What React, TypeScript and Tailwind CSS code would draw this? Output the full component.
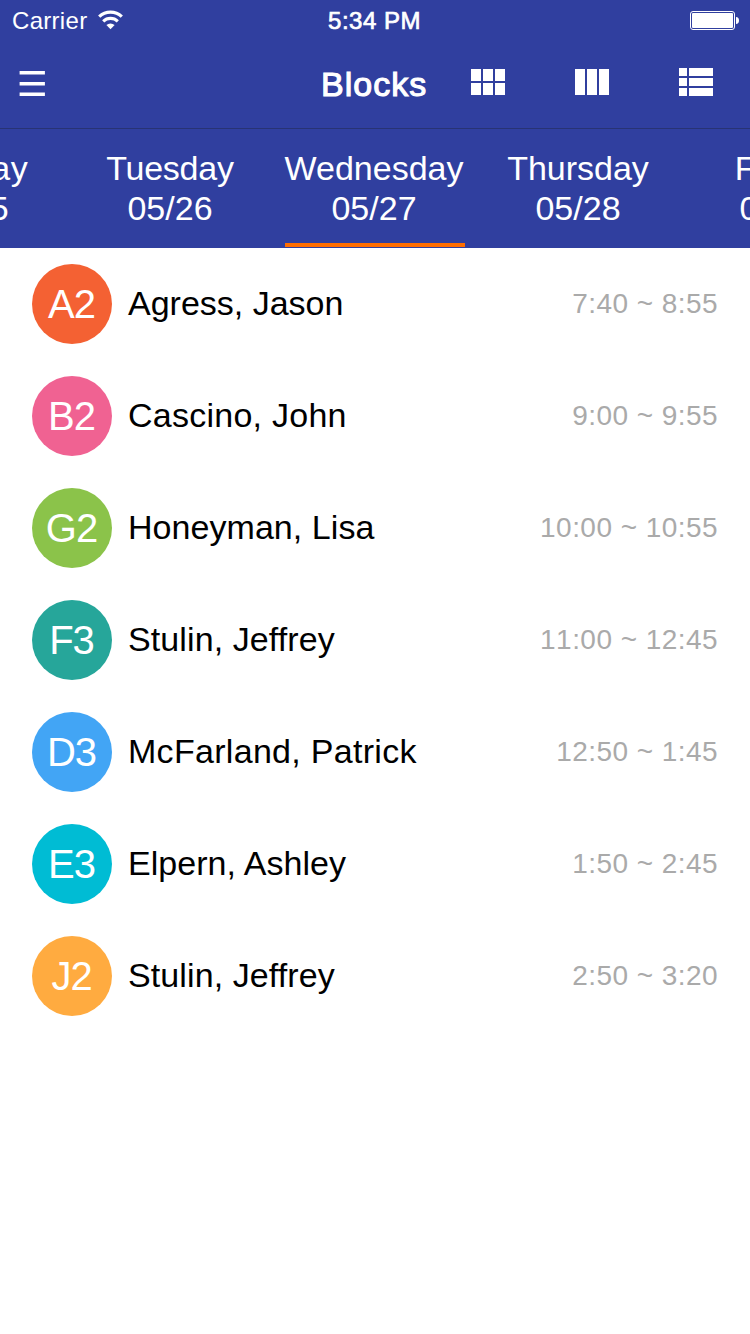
const days = [
  { name: "Monday", date: "05/25", active: false, tracking: "tracking-[0.7px]" },
  { name: "Tuesday", date: "05/26", active: false, tracking: "tracking-[-0.25px]" },
  { name: "Wednesday", date: "05/27", active: true, tracking: "tracking-normal" },
  { name: "Thursday", date: "05/28", active: false, tracking: "tracking-normal" },
  { name: "Friday", date: "05/29", active: false, tracking: "tracking-normal" },
];

const blocks = [
  { code: "A2", teacher: "Agress, Jason", time: "7:40 ~ 8:55", color: "bg-[#f46133]", tracking: "tracking-normal" },
  { code: "B2", teacher: "Cascino, John", time: "9:00 ~ 9:55", color: "bg-[#f06292]", tracking: "tracking-[0.25px]" },
  { code: "G2", teacher: "Honeyman, Lisa", time: "10:00 ~ 10:55", color: "bg-[#8bc34a]", tracking: "tracking-[0.05px]" },
  { code: "F3", teacher: "Stulin, Jeffrey", time: "11:00 ~ 12:45", color: "bg-[#26a69a]", tracking: "tracking-[0.1px]" },
  { code: "D3", teacher: "McFarland, Patrick", time: "12:50 ~ 1:45", color: "bg-[#42a5f5]", tracking: "tracking-[0.3px]" },
  { code: "E3", teacher: "Elpern, Ashley", time: "1:50 ~ 2:45", color: "bg-[#00bcd4]", tracking: "tracking-[0.05px]" },
  { code: "J2", teacher: "Stulin, Jeffrey", time: "2:50 ~ 3:20", color: "bg-[#ffab40]", tracking: "tracking-[0.1px]" },
];

function WifiIcon() {
  return (
    <svg width="26" height="20" viewBox="0 0 26 20" fill="none" stroke="#fff">
      <path d="M1.2 6.700a16.400 16.400 0 0 1 22.600 0" strokeWidth="3.2" />
      <path d="M5.200 11.300a10.600 10.600 0 0 1 14.600 0" strokeWidth="3.1" />
      <path d="M12.5 19.300l-4.100-4.200a5.900 5.900 0 0 1 8.200 0z" fill="#fff" stroke="none" />
    </svg>
  );
}

function BatteryIcon() {
  return (
    <svg width="50" height="20" viewBox="0 0 50 20">
      <rect x="0.5" y="0.5" width="44" height="18" rx="2.5" fill="none" stroke="#fff" />
      <rect x="2" y="2" width="41" height="15" rx="1" fill="#fff" />
      <path d="M46 6c2 0 3 1.500 3 3.500s-1 3.500-3 3.500z" fill="#fff" />
    </svg>
  );
}

function ViewIcon({ d }: { d: string }) {
  return (
    <svg width="48" height="48" viewBox="0 0 24 24" fill="#fff">
      <path d={d} />
    </svg>
  );
}

export default function App() {
  return (
    <div className="flex h-[1334px] w-[750px] flex-col overflow-hidden bg-white font-['Liberation_Sans',Arial,sans-serif]">
      <header className="h-[248px] shrink-0 bg-[#303f9f] text-white">
        <div className="grid h-10 grid-cols-3 items-start text-2xl leading-[40px]">
          <div className="flex items-start pt-px pl-3">
            <span className="tracking-[0.3px]">Carrier</span>
            <span className="mt-[9px] ml-[11px]">
              <WifiIcon />
            </span>
          </div>
          <div className="pt-px pr-px text-center tracking-[0.5px] [-webkit-text-stroke:0.7px_white]">5:34 PM</div>
          <div className="flex justify-end pt-[11px] pr-[10px]">
            <BatteryIcon />
          </div>
        </div>

        <div className="flex h-[89px] items-start border-b border-[#283374]">
          <button aria-label="Menu" className="mt-[30px] ml-[19px]">
            <svg width="27" height="28" viewBox="0 0 27 28" fill="#fff">
              <path d="M.6 .9h25.300v3.600H.6zM.6 12h25.300v3.600H.6zM.6 22.500h25.300v3.500H.6z" />
            </svg>
          </button>
          <h1 className="mt-[24px] ml-[275px] w-[142px] text-[34px] leading-[40px] tracking-[1px] [-webkit-text-stroke:1.1px_white]">
            Blocks
          </h1>
          <nav className="mt-[18px] flex items-start gap-14">
            <button aria-label="Grid view" className="mt-px">
              <ViewIcon d="M4 11h5V5H4v6zm0 7h5v-6H4v6zm6 0h5v-6h-5v6zm6 0h5v-6h-5v6zm-6-7h5V5h-5v6zm6-6v6h5V5h-5z" />
            </button>
            <button aria-label="Column view" className="mt-px">
              <ViewIcon d="M10 18h5V5h-5v13zm-6 0h5V5H4v13zM16 5v13h5V5h-5z" />
            </button>
            <button aria-label="List view">
              <ViewIcon d="M4 14h4v-4H4v4zm0 5h4v-4H4v4zM4 9h4V5H4v4zm5 5h12v-4H9v4zm0 5h12v-4H9v4zM9 5v4h12V5H9z" />
            </button>
          </nav>
        </div>

        <div className="-ml-[136px] flex h-[119px]">
          {days.map((day) => (
            <div key={day.name} className="flex w-[204px] shrink-0 flex-col items-center pt-[19px] text-[34px] leading-[40px]">
              <span className={day.tracking}>{day.name}</span>
              <span>{day.date}</span>
              {day.active && <div className="mt-[15px] ml-[2px] h-1 w-[180px] bg-[#ff6d00]" />}
            </div>
          ))}
        </div>
      </header>

      <main>
        {blocks.map((block) => (
          <div key={block.code} className="flex h-28 items-center px-8">
            <div className={`flex size-20 items-center justify-center rounded-full pr-px text-[40px] tracking-[-1px] text-white ${block.color}`}>
              {block.code}
            </div>
            <span className={`mb-[2px] ml-4 text-[34px] text-black ${block.tracking}`}>{block.teacher}</span>
            <span className="ml-auto text-[28px] tracking-[0.45px] text-[#aaaaaa] [font-kerning:none]">{block.time}</span>
          </div>
        ))}
      </main>
    </div>
  );
}
